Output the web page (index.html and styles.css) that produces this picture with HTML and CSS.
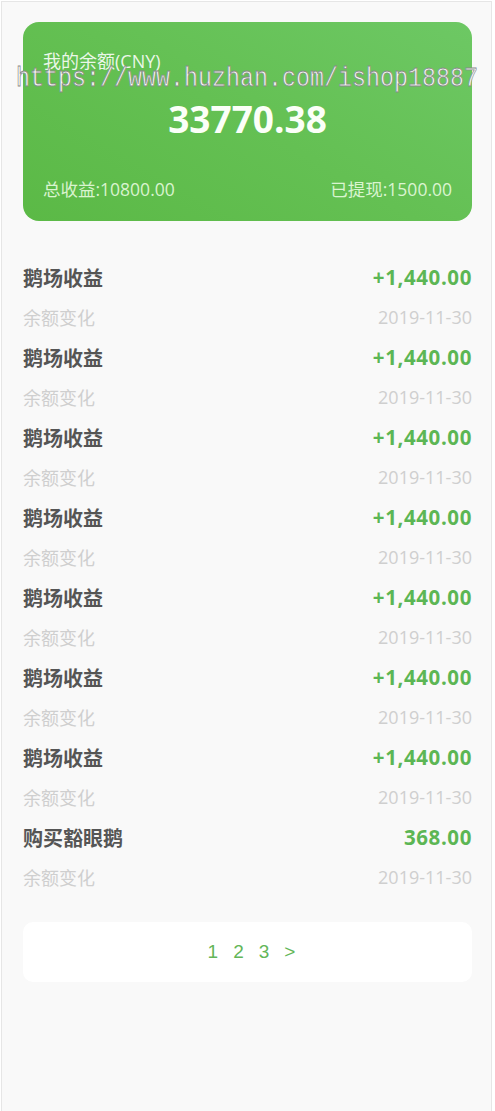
FILE: index.html
```html
<!DOCTYPE html>
<html lang="zh-CN">
<head>
<meta charset="utf-8">
<title>我的余额</title>
<link rel="stylesheet" href="styles.css">
</head>
<body>
<div class="page">
  <section class="balance-card">
    <div class="balance-label">我的余额(CNY)</div>
    <div class="balance-amount">33770.38</div>
    <div class="balance-foot">
      <span>总收益:10800.00</span>
      <span>已提现:1500.00</span>
    </div>
  </section>

  <ul class="records">
    <li class="record">
      <div class="row"><span class="title">鹅场收益</span><span class="amount">+1,440.00</span></div>
      <div class="row sub"><span>余额变化</span><span>2019-11-30</span></div>
    </li>
    <li class="record">
      <div class="row"><span class="title">鹅场收益</span><span class="amount">+1,440.00</span></div>
      <div class="row sub"><span>余额变化</span><span>2019-11-30</span></div>
    </li>
    <li class="record">
      <div class="row"><span class="title">鹅场收益</span><span class="amount">+1,440.00</span></div>
      <div class="row sub"><span>余额变化</span><span>2019-11-30</span></div>
    </li>
    <li class="record">
      <div class="row"><span class="title">鹅场收益</span><span class="amount">+1,440.00</span></div>
      <div class="row sub"><span>余额变化</span><span>2019-11-30</span></div>
    </li>
    <li class="record">
      <div class="row"><span class="title">鹅场收益</span><span class="amount">+1,440.00</span></div>
      <div class="row sub"><span>余额变化</span><span>2019-11-30</span></div>
    </li>
    <li class="record">
      <div class="row"><span class="title">鹅场收益</span><span class="amount">+1,440.00</span></div>
      <div class="row sub"><span>余额变化</span><span>2019-11-30</span></div>
    </li>
    <li class="record">
      <div class="row"><span class="title">鹅场收益</span><span class="amount">+1,440.00</span></div>
      <div class="row sub"><span>余额变化</span><span>2019-11-30</span></div>
    </li>
    <li class="record">
      <div class="row"><span class="title">购买豁眼鹅</span><span class="amount">368.00</span></div>
      <div class="row sub"><span>余额变化</span><span>2019-11-30</span></div>
    </li>
  </ul>

  <nav class="pager">
    <a class="pg">1</a>
    <a class="pg">2</a>
    <a class="pg">3</a>
    <a class="pg">&gt;</a>
  </nav>

  <div class="watermark">https://www.huzhan.com/ishop18887</div>
</div>
</body>
</html>
```

FILE: styles.css
```css
* { box-sizing: border-box; }

html, body {
  margin: 0;
  padding: 0;
  background: #ffffff;
}

body {
  font-family: "Open Sans", "Noto Sans CJK SC", sans-serif;
}

.page {
  position: relative;
  margin: 1px 0 0 1px;
  width: 491px;
  min-height: 1120px;
  background: #f9f9f9;
  border: 1px solid #e6e6e6;
  padding: 20px 19px 0 21px;
}

.balance-card {
  height: 199px;
  border-radius: 16px;
  background: linear-gradient(30deg, #5bb946 0%, #64c053 50%, #6dc864 100%);
  padding: 28px 20px 0 20px;
  color: #fff;
}

.balance-label {
  font-size: 18px;
  line-height: 22px;
  color: rgba(255, 255, 255, 0.88);
}

.balance-amount {
  margin-top: 22px;
  text-align: center;
  font-size: 37px;
  font-weight: 700;
  line-height: 50px;
  color: #fbfff8;
}

.balance-foot {
  margin-top: 35px;
  display: flex;
  justify-content: space-between;
  font-size: 17.5px;
  line-height: 20px;
  color: rgba(240, 255, 232, 0.85);
}

.records {
  list-style: none;
  margin: 36px 0 0 0;
  padding: 0;
}

.row {
  display: flex;
  justify-content: space-between;
  align-items: center;
  height: 40px;
}

.title {
  font-size: 20px;
  font-weight: 700;
  color: #555555;
}

.amount {
  font-size: 20.5px;
  font-weight: 700;
  color: #5cb654;
  letter-spacing: 0.6px;
}

.sub {
  font-size: 18px;
  color: #cfcfcf;
}

.pager {
  margin-top: 25px;
  height: 60px;
  background: #ffffff;
  border-radius: 10px;
  display: flex;
  justify-content: center;
  align-items: center;
  gap: 15px;
  padding-left: 8px;
  font-family: "Liberation Sans", sans-serif;
  font-size: 19px;
  color: #63b658;
}

.pg {
  color: #63b658;
  text-decoration: none;
}

.watermark {
  position: absolute;
  left: 14px;
  top: 63px;
  font-family: "Liberation Mono", monospace;
  font-size: 28px;
  line-height: 1;
  white-space: nowrap;
  color: rgba(255, 255, 255, 0.95);
  -webkit-text-stroke: 0.8px #8a8a8a;
  transform: scaleX(0.833);
  transform-origin: left top;
  pointer-events: none;
}
```
